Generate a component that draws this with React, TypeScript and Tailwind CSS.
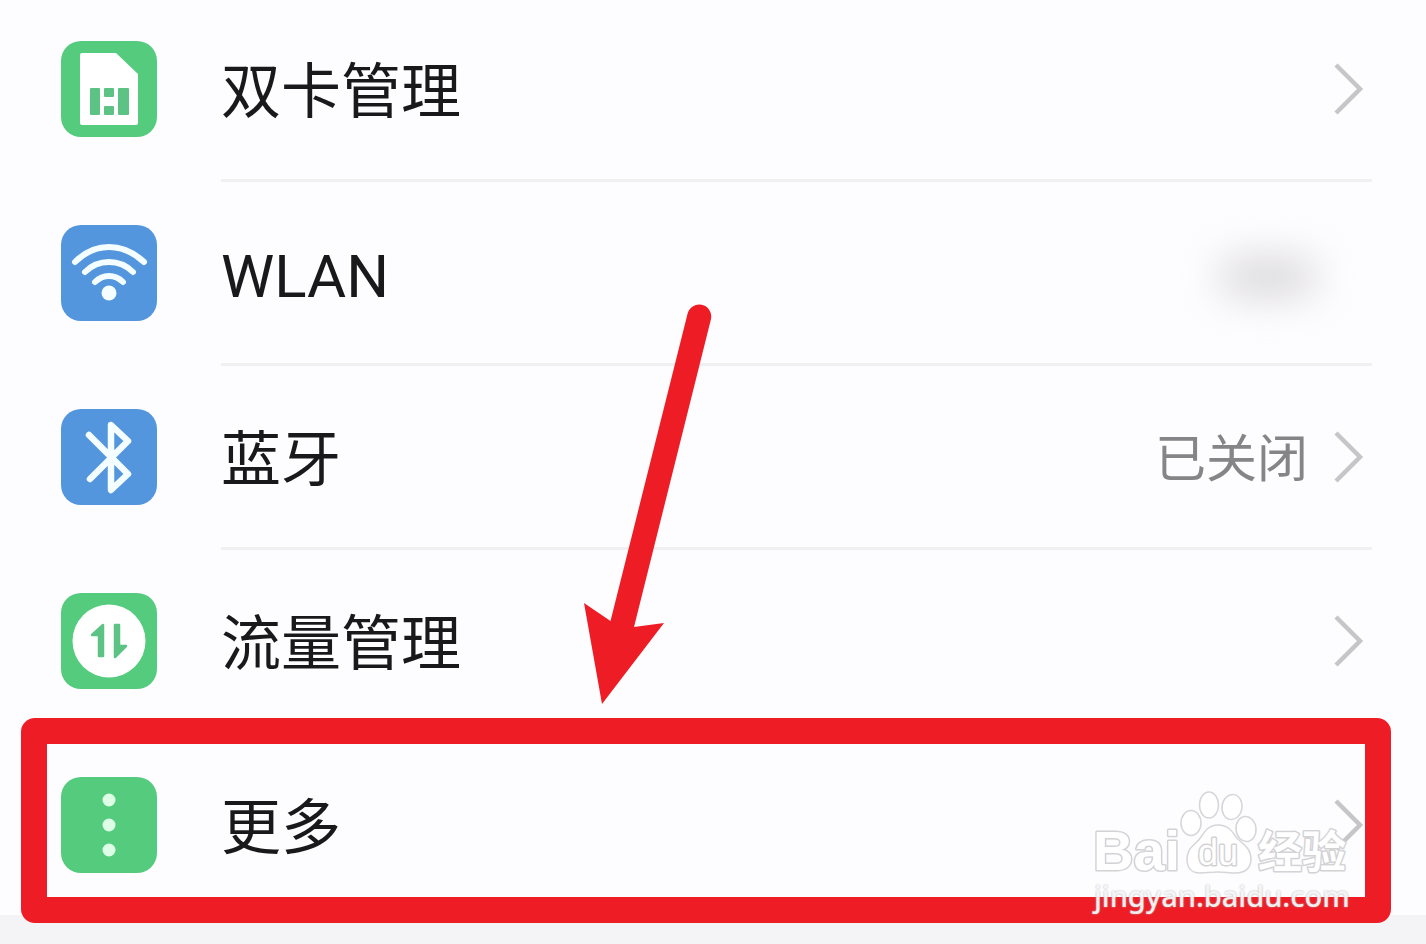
import type { ReactNode } from "react";

type Row = {
  label: string;
  tone: "green" | "blue";
  icon: ReactNode;
  value?: string;
  hiddenValue?: boolean;
  highlighted?: boolean;
};

const SimIcon = () => (
  <svg viewBox="0 0 96 96" className="size-full" aria-hidden="true">
    <path d="M20 12H55L77 33V82Q77 84 75 84H21Q19 84 19 82V14Q19 12 21 12Z" fill="#fff" />
    <g fill="#5cc384">
      <rect x="29" y="47" width="10" height="27" rx="1" />
      <rect x="43" y="47" width="10" height="9" rx="1" />
      <rect x="43" y="65" width="10" height="9" rx="1" />
      <rect x="57" y="47" width="11" height="27" rx="1" />
    </g>
  </svg>
);

const WifiIcon = () => (
  <svg viewBox="0 0 96 96" className="size-full" aria-hidden="true">
    <g fill="none" stroke="#f4fdff" strokeWidth="6" strokeLinecap="round">
      <path d="M14 37Q29 22 48 22T83 37" />
      <path d="M24 47Q34 37 48 37T72 47" />
      <path d="M34 57Q40 51 48 51T62 57" />
    </g>
    <circle cx="48" cy="68" r="7.5" fill="#f4fdff" />
  </svg>
);

const BluetoothIcon = () => (
  <svg viewBox="0 0 96 96" className="size-full" aria-hidden="true">
    <path
      d="M28 26L67 65L50 81V16L67 32L29 70"
      fill="none"
      stroke="#f4fdff"
      strokeWidth="6.500"
      strokeLinecap="round"
      strokeLinejoin="round"
    />
  </svg>
);

const DataIcon = () => (
  <svg viewBox="0 0 96 96" className="size-full" aria-hidden="true">
    <circle cx="48" cy="48" r="36.5" fill="#fff" />
    <g fill="#5cc384" stroke="#5cc384" strokeWidth="2.500" strokeLinejoin="round">
      <path d="M42 32V63H38V42H31Z" />
      <path d="M54 32H58V53H65L54 64Z" />
    </g>
  </svg>
);

const MoreIcon = () => (
  <svg viewBox="0 0 96 96" className="size-full" aria-hidden="true">
    <g fill="#dcffe6">
      <circle cx="48" cy="23" r="6.5" />
      <circle cx="48" cy="48" r="6.5" />
      <circle cx="48" cy="73" r="6.5" />
    </g>
  </svg>
);

const Chevron = () => (
  <svg viewBox="0 0 30 52" className="h-[52px] w-[30px] shrink-0" aria-hidden="true">
    <path d="M2 2L26 26L2 50" fill="none" stroke="#c6c5c8" strokeWidth="4.500" />
  </svg>
);

const Arrow = () => (
  <svg
    viewBox="0 0 128 400"
    className="pointer-events-none absolute top-[304px] left-[41%] h-[400px] w-[128px] overflow-visible"
    aria-hidden="true"
  >
    <path
      d="M102.500 10A12 12 0 0 1 126 15L49 323L79 319L17 400L-1 299L25.500 317Z"
      fill="#ee1c25"
    />
  </svg>
);

const Watermark = () => (
  <div className="pointer-events-none absolute right-[74px] bottom-0 flex w-[260px] flex-col">
    <svg viewBox="0 0 260 90" className="h-[90px] w-[260px] overflow-visible">
      <g fill="#fff" stroke="#d6d5d8" strokeWidth="1.500">
        <ellipse cx="99" cy="36" rx="10" ry="12.500" />
        <ellipse cx="117" cy="18" rx="9.500" ry="13" />
        <ellipse cx="140" cy="20" rx="10" ry="12.500" transform="rotate(8 140 20)" />
        <ellipse cx="154" cy="42" rx="10" ry="12.500" transform="rotate(-6 154 42)" />
        <path d="M126 38C136 38 140 44 144 50C149 56 159 60 159 72C159 81 153 86 144 86C137 86 133 85 126 85C119 85 114 86 108 86C99 86 95 80 95 72C95 60 104 58 109 50C113 44 117 38 126 38Z" />
      </g>
      <g fill="#fff" stroke="#d3d2d5" strokeLinejoin="round" style={{ paintOrder: "stroke" }}>
        <text x="1" y="83" strokeWidth="3" className="font-['Liberation_Sans',sans-serif] text-[56px] font-bold">Bai</text>
        <text x="106" y="78" strokeWidth="3" className="font-['Liberation_Sans',sans-serif] text-[36px]">du</text>
        <text x="166" y="81" strokeWidth="3" className="font-['Noto_Sans_CJK_SC',sans-serif] text-[44px] font-bold">经验</text>
      </g>
    </svg>
    <span className="pl-0.5 font-['Noto_Sans',sans-serif] text-[29px] leading-[38px] font-medium whitespace-nowrap text-white/85 [text-shadow:0_0_2px_#aaa]">
      jingyan.baidu.com
    </span>
  </div>
);

const rows: Row[] = [
  { label: "双卡管理", tone: "green", icon: <SimIcon /> },
  { label: "WLAN", tone: "blue", icon: <WifiIcon />, hiddenValue: true },
  { label: "蓝牙", tone: "blue", icon: <BluetoothIcon />, value: "已关闭" },
  { label: "流量管理", tone: "green", icon: <DataIcon /> },
  { label: "更多", tone: "green", icon: <MoreIcon />, highlighted: true },
];

const tones = { green: "bg-[#55cb7d]", blue: "bg-[#5396dd]" };

function SettingRow({ label, tone, icon, value, hiddenValue, highlighted }: Row) {
  return (
    <li className="relative">
      <button type="button" className="flex w-full items-stretch pr-[54px] pl-[61px] text-left">
        <span className={`flex items-center ${highlighted ? "" : "pb-[3px]"}`}>
          <span className={`size-24 shrink-0 overflow-hidden rounded-[20px] ${tones[tone]}`}>{icon}</span>
        </span>
        <span
          className={`ml-16 flex flex-1 items-center justify-between pr-2 ${
            highlighted ? "h-[181px]" : "h-[184px] border-b-[3px] border-[#f0eff1]"
          }`}
        >
          <span className="pt-2 text-[60px] leading-[80px] text-[#19181a]">{label}</span>
          <span className="flex items-center gap-[26px]">
            {value && <span className="pt-1.5 text-[51px] leading-[64px] text-[#858487]">{value}</span>}
            {hiddenValue ? (
              <span className="mt-2 mr-12 h-9 w-24 rounded-full bg-[#d6d5d8] blur-[20px]" />
            ) : (
              <Chevron />
            )}
          </span>
        </span>
      </button>
      {highlighted && (
        <>
          <div className="pointer-events-none absolute -top-4 right-[35px] -bottom-2 left-[21px] rounded-[14px] border-[26px] border-[#ee1c25]" />
          <Watermark />
        </>
      )}
    </li>
  );
}

export default function App() {
  return (
    <main className="relative flex min-h-screen flex-col overflow-hidden bg-[#fdfcfe] font-[Roboto,'Noto_Sans_CJK_SC',sans-serif]">
      <ul className="-mt-0.5">
        {rows.map((row) => (
          <SettingRow key={row.label} {...row} />
        ))}
      </ul>
      <div className="flex-1 bg-[#f4f3f5]" />
      <Arrow />
    </main>
  );
}
